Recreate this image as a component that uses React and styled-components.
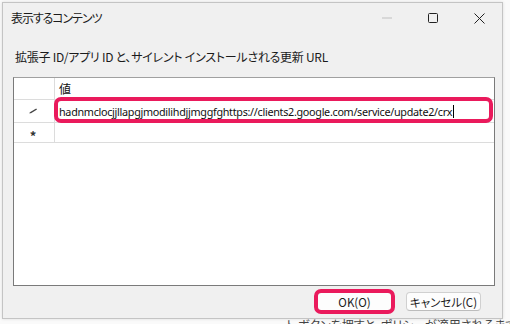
import React from "react";
import styled, { createGlobalStyle } from "styled-components";

const GlobalStyle = createGlobalStyle`
  html, body {
    margin: 0;
    padding: 0;
    background: #ffffff;
  }
  body {
    font-family: "Noto Sans CJK JP", "Noto Sans", sans-serif;
    color: #1a1a1a;
  }
`;

const Screen = styled.div`
  width: 510px;
  height: 324px;
  overflow: hidden;
  position: relative;
  background: #fafafa;
`;

const Window = styled.div`
  margin: 2px 0 0 2px;
  width: 499px;
  height: 315px;
  background: #f0f0f0;
  border: 1px solid #c4c4c4;
  display: flex;
  flex-direction: column;
  box-shadow: 0 0 3px rgba(0, 0, 0, 0.12);
`;

const TitleBar = styled.div`
  height: 30px;
  display: flex;
  align-items: center;
  padding-left: 8px;
`;

const Title = styled.div`
  flex: 1;
  font-size: 12px;
  font-feature-settings: "palt";
  letter-spacing: -1.1px;
  color: #1b1b1b;
  line-height: 16px;
`;

const CaptionButton = styled.div`
  width: 46px;
  height: 30px;
  display: flex;
  align-items: center;
  justify-content: center;
  color: ${(p) => (p.dim ? "#b4b4b4" : "#222")};
`;

const Body = styled.div`
  flex: 1;
  display: flex;
  flex-direction: column;
  padding: 16px 8px 0 10px;
`;

const Label = styled.div`
  font-size: 12px;
  line-height: 16px;
  font-feature-settings: "palt";
  letter-spacing: -0.25px;
  padding-left: 2px;
  color: #1b1b1b;
`;

const Grid = styled.div`
  margin-top: 12px;
  width: 480px;
  height: 207px;
  background: #ffffff;
  border: 1px solid #7a7a7a;
  border-top-color: #a0a0a0;
  display: flex;
  flex-direction: column;
`;

const Row = styled.div`
  display: flex;
  height: ${(p) => p.h}px;
  border-bottom: 1px solid #dcdcdc;
  box-sizing: border-box;
`;

const RowHead = styled.div`
  width: 41px;
  border-right: 1px solid #dcdcdc;
  display: flex;
  align-items: center;
  justify-content: center;
  padding-right: 2px;
  box-sizing: border-box;
`;

const Cell = styled.div`
  flex: 1;
  display: flex;
  align-items: center;
  padding-left: 4px;
  font-size: ${(p) => (p.head ? 12 : 10.8)}px;
  font-family: ${(p) =>
    p.head ? `"Noto Sans CJK JP", sans-serif` : `"Noto Sans", sans-serif`};
  color: #111;
  position: relative;
  white-space: nowrap;
  letter-spacing: ${(p) => (p.head ? 0 : -0.3)}px;
`;

const Highlight = styled.span`
  position: absolute;
  pointer-events: none;
  border: 4px solid #ea1a5c;
  border-radius: 7px;
  top: ${(p) => p.t}px;
  bottom: ${(p) => p.b}px;
  left: ${(p) => p.l}px;
  right: ${(p) => p.r}px;
`;

const Caret = styled.span`
  display: inline-block;
  width: 1px;
  height: 13px;
  background: #000;
  margin-left: 1px;
  vertical-align: middle;
`;

const Star = styled.span`
  font-size: 13px;
  font-weight: bold;
  color: #333;
  line-height: 1;
  margin-top: 5px;
`;

const Footer = styled.div`
  display: flex;
  justify-content: flex-end;
  gap: 14px;
  padding: 6px 13px 0 0;
`;

const Button = styled.div`
  position: relative;
  width: 75px;
  height: 19px;
  box-sizing: border-box;
  background: #fdfdfd;
  border: 1px solid #d0d0d0;
  border-bottom-color: #bcbcbc;
  border-radius: 4px;
  display: flex;
  align-items: center;
  justify-content: center;
  font-size: 11.5px;
  font-feature-settings: "palt";
  color: #1b1b1b;
`;

const Behind = styled.div`
  position: absolute;
  left: 286px;
  top: 318px;
  font-size: 12px;
  line-height: 14px;
  color: #444;
  white-space: nowrap;
  font-feature-settings: "palt";
`;

const Pencil = () => (
  <svg width="10" height="6" viewBox="0 0 10 6">
    <path d="M1 5.2 L3 5.2 L9 1.4 L8.2 0.6 L2.3 4.1 Z" fill="#444" />
  </svg>
);

export default function App() {
  return (
    <>
      <GlobalStyle />
      <Screen>
        <Window>
          <TitleBar>
            <Title>表示するコンテンツ</Title>
            <CaptionButton dim>
              <svg width="10" height="2" viewBox="0 0 10 2">
                <rect x="0" y="0.5" width="10" height="1" fill="#c0c0c0" />
              </svg>
            </CaptionButton>
            <CaptionButton>
              <svg width="10" height="10" viewBox="0 0 10 10">
                <rect x="0.5" y="0.5" width="9" height="9" rx="1" fill="none" stroke="#222" strokeWidth="1" />
              </svg>
            </CaptionButton>
            <CaptionButton>
              <svg width="11" height="11" viewBox="0 0 11 11">
                <path d="M0.5 0.5 L10.5 10.5 M10.5 0.5 L0.5 10.5" stroke="#222" strokeWidth="1" />
              </svg>
            </CaptionButton>
          </TitleBar>
          <Body>
            <Label>拡張子 ID/アプリ ID と、サイレント インストールされる更新 URL</Label>
            <Grid>
              <Row h={22}>
                <RowHead />
                <Cell head>値</Cell>
              </Row>
              <Row h={23}>
                <RowHead>
                  <Pencil />
                </RowHead>
                <Cell>
                  hadnmclocjjllapgjmodilihdjjmggfghttps://clients2.google.com/service/update2/crx
                  <Caret />
                  <Highlight t={-3} b={-1} l={-1} r={1} />
                </Cell>
              </Row>
              <Row h={20}>
                <RowHead>
                  <Star>*</Star>
                </RowHead>
                <Cell />
              </Row>
            </Grid>
            <Footer>
              <Button>
                OK(O)
                <Highlight t={-4} b={-4} l={-4} r={-4} />
              </Button>
              <Button>キャンセル(C)</Button>
            </Footer>
          </Body>
        </Window>
        <Behind>ト ボタンを押すと、ポリシーが適用されるまで待機します</Behind>
      </Screen>
    </>
  );
}
